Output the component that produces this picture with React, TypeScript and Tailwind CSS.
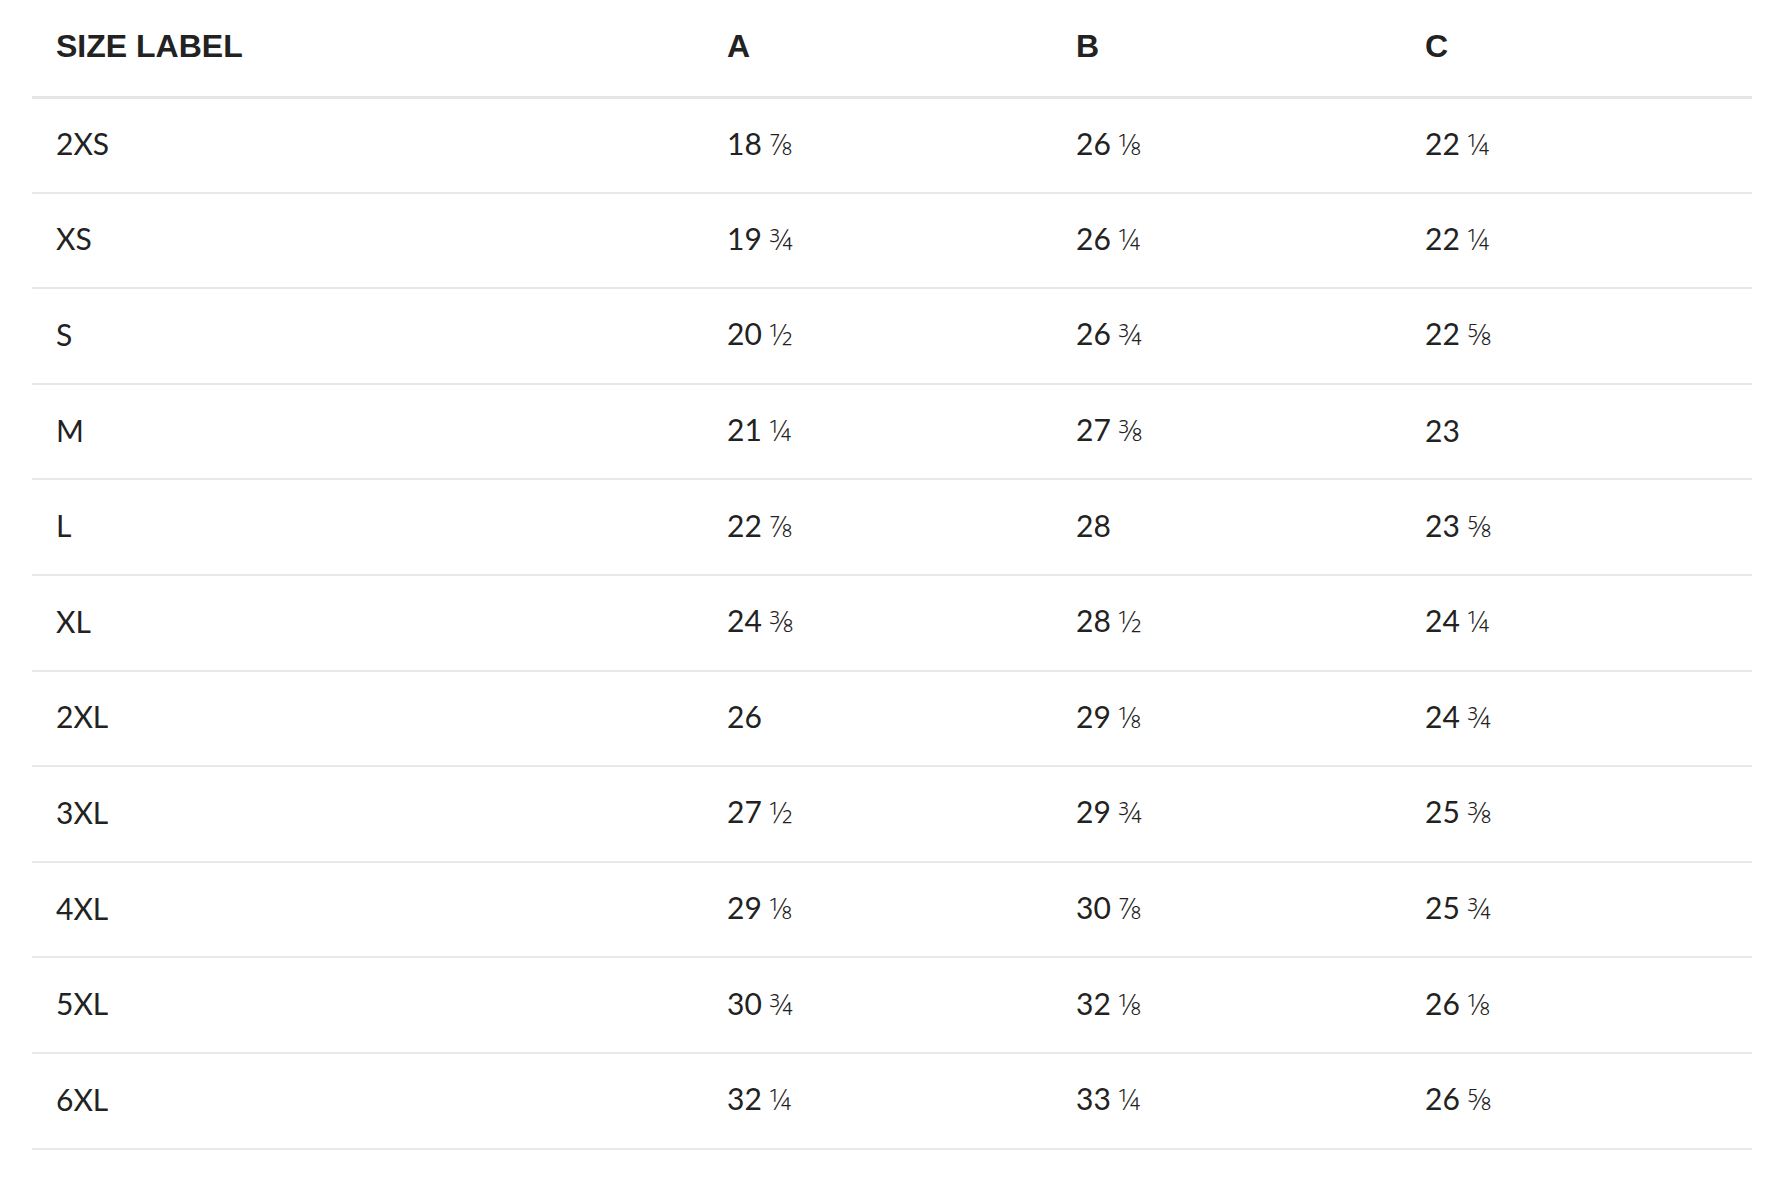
const rows: [string, string, string, string][] = [
  ["2XS", "18 ⅞", "26 ⅛", "22 ¼"],
  ["XS", "19 ¾", "26 ¼", "22 ¼"],
  ["S", "20 ½", "26 ¾", "22 ⅝"],
  ["M", "21 ¼", "27 ⅜", "23"],
  ["L", "22 ⅞", "28", "23 ⅝"],
  ["XL", "24 ⅜", "28 ½", "24 ¼"],
  ["2XL", "26", "29 ⅛", "24 ¾"],
  ["3XL", "27 ½", "29 ¾", "25 ⅜"],
  ["4XL", "29 ⅛", "30 ⅞", "25 ¾"],
  ["5XL", "30 ¾", "32 ⅛", "26 ⅛"],
  ["6XL", "32 ¼", "33 ¼", "26 ⅝"],
];

function Measure({ value }: { value: string }) {
  const [whole, frac] = value.split(" ");
  return (
    <>
      {whole}
      {frac && (
        <>
          {" "}
          <span className="font-['Open_Sans',sans-serif] font-light">{frac}</span>
        </>
      )}
    </>
  );
}

export default function App() {
  return (
    <div className="min-h-screen bg-white pl-8 pr-[34px] text-[#222222]">
      <table className="w-full border-collapse table-fixed">
        <colgroup>
          <col className="w-[671px]" />
          <col className="w-[349px]" />
          <col className="w-[349px]" />
          <col />
        </colgroup>
        <thead>
          <tr className="h-[97px] border-b-[3px] border-[#e5e5e5]">
            {["SIZE LABEL", "A", "B", "C"].map((h) => (
              <th
                key={h}
                className="px-6 pb-[3px] text-left align-middle font-['Liberation_Sans',Arial,sans-serif] text-[32px] font-bold leading-none"
              >
                {h}
              </th>
            ))}
          </tr>
        </thead>
        <tbody>
          {rows.map((r) => (
            <tr key={r[0]} className="h-[95.6px] border-b-2 border-[#e8e8e8]">
              {r.map((c, i) => (
                <td
                  key={i}
                  className="px-6 pb-[4px] align-middle font-['Lato','Noto_Sans',sans-serif] text-[30px] leading-none"
                >
                  <Measure value={c} />
                </td>
              ))}
            </tr>
          ))}
        </tbody>
      </table>
    </div>
  );
}
